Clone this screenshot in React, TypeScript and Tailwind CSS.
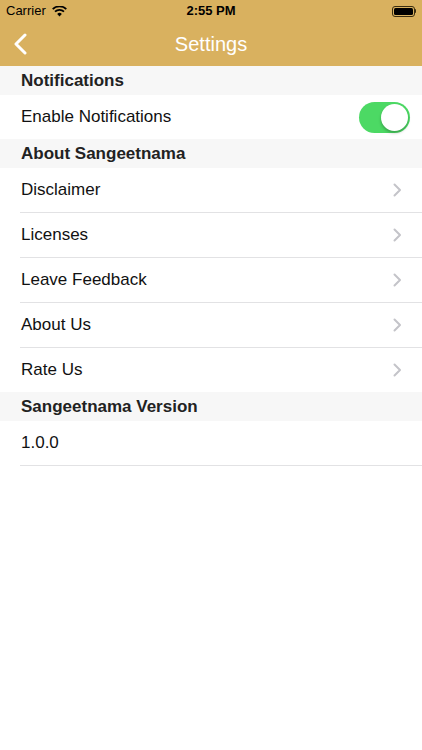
import React from 'react'

function Chevron() {
    return (
        <svg width="9" height="14" viewBox="0 0 9 14" fill="none">
            <path d="M1.5 1.5L7 7l-5.5 5.5" stroke="#c4c4c9" strokeWidth="2" strokeLinecap="round" strokeLinejoin="round" />
        </svg>
    )
}

function SectionHeader({ title }: { title: string }) {
    return (
        <div className="h-[29px] bg-[#f7f7f7] px-[21px] flex items-center">
            <span className="text-[17px] font-semibold text-[#222]">{title}</span>
        </div>
    )
}

function Row({ label, chevron, last }: { label: string; chevron?: boolean; last?: boolean }) {
    return (
        <div className="bg-white pl-[20px]">
            <div className={'flex items-center justify-between pr-[20px] ' + (last ? 'h-[44px]' : 'h-[45px] border-b border-[#e2e2e4]')}>
                <span className="pl-[1px] text-[17px] text-[#111]">{label}</span>
                {chevron && <Chevron />}
            </div>
        </div>
    )
}

export default function App() {
    const about = ['Disclaimer', 'Licenses', 'Leave Feedback', 'About Us', 'Rate Us']
    return (
        <div className="w-[422px] h-[750px] bg-white font-['Liberation_Sans',sans-serif]">
            <div className="bg-[#d9b15f]">
                <div className="h-[22px] relative flex items-center px-[6px] text-[13px] text-black">
                    <div className="flex items-center gap-[6px]">
                        <span>Carrier</span>
                        <svg width="15" height="11" viewBox="0 0 15 11">
                            <path d="M7.5 10.5L5.2 7.9a3.4 3.4 0 0 1 4.6 0z" fill="#000" />
                            <path d="M3.6 6.2a5.7 5.7 0 0 1 7.8 0l1.2-1.3a7.5 7.5 0 0 0-10.2 0z" fill="#000" />
                            <path d="M1.3 3.7a9 9 0 0 1 12.4 0L14.9 2.4a10.8 10.8 0 0 0-14.8 0z" fill="#000" />
                        </svg>
                    </div>
                    <span className="absolute left-0 right-0 text-center font-semibold">2:55 PM</span>
                    <div className="ml-auto flex items-center">
                        <div className="w-[23px] h-[11px] rounded-[3px] border border-[#3a2d10] p-[1px]">
                            <div className="w-full h-full bg-black rounded-[1.5px]" />
                        </div>
                        <div className="w-[1.5px] h-[4px] bg-[#3a2d10] rounded-r-sm" />
                    </div>
                </div>
                <div className="h-[44px] relative flex items-center">
                    <svg className="ml-[14px]" width="13" height="22" viewBox="0 0 13 22" fill="none">
                        <path d="M11 2L2 11l9 9" stroke="#fff" strokeWidth="3" strokeLinecap="round" strokeLinejoin="round" />
                    </svg>
                    <span className="absolute left-0 right-0 text-center text-[20px] text-white">Settings</span>
                </div>
            </div>

            <SectionHeader title="Notifications" />
            <div className="bg-white h-[44px] flex items-center justify-between pl-[21px] pr-[12px]">
                <span className="text-[17px] text-[#111]">Enable Notifications</span>
                <div className="w-[51px] h-[31px] rounded-full bg-[#4cd964] p-[2px] flex justify-end">
                    <div className="w-[27px] h-[27px] rounded-full bg-white shadow-[0_2px_3px_rgba(0,0,0,0.25)]" />
                </div>
            </div>

            <SectionHeader title="About Sangeetnama" />
            {about.map((l, i) => (
                <Row key={l} label={l} chevron last={i === about.length - 1} />
            ))}

            <SectionHeader title="Sangeetnama Version" />
            <Row label="1.0.0" />
        </div>
    )
}
